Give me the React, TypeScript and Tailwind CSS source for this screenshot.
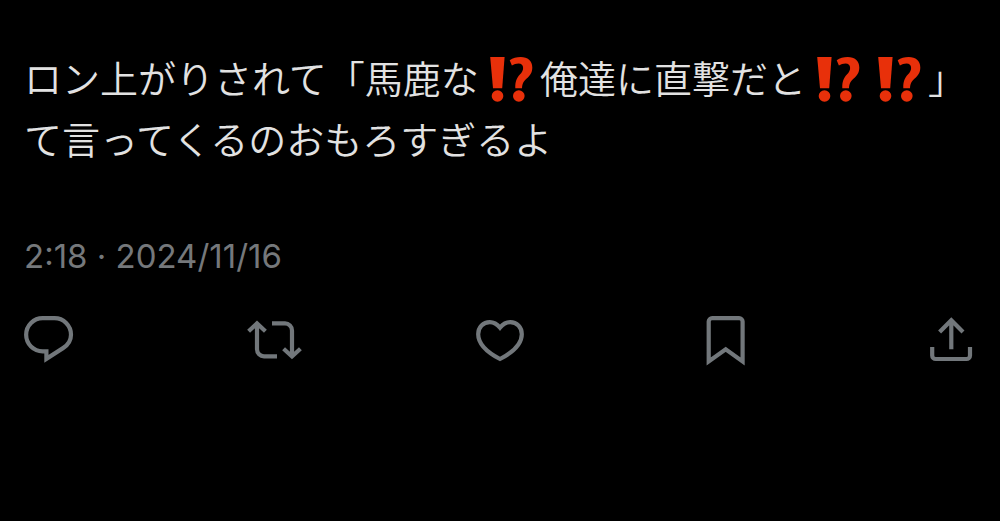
import type { ReactNode } from "react";

function Interrobang() {
  return (
    <svg
      role="img"
      aria-label="⁉️"
      viewBox="-2 0 61 50"
      className="inline-block h-[50px] w-[61px] align-[-11px]"
      fill="#e8300a"
    >
      <path d="M9.2 3h14.4l-2.4 31.3h-9.2z" />
      <circle cx="16.5" cy="42" r="5.8" />
      <path d="M28.7 6.2C31.9 4 35.5 3 39.7 3c7 0 11.6 4 11.6 10.4 0 5-2.2 8-5.6 11.2-3 2.8-4.4 4.8-4.7 9.7h-6.7c-.2-6.6 1.3-10.2 4.6-13.7 2.2-2.4 3.2-4 3.2-6.6 0-3-1.6-4.6-4.6-4.6-2.4 0-4.6.8-6.6 2.2z" />
      <circle cx="37.8" cy="42" r="5.8" />
    </svg>
  );
}

function Action({ label, children }: { label: string; children: ReactNode }) {
  return (
    <button type="button" aria-label={label} className="size-14 text-[#72777b]">
      <svg
        aria-hidden="true"
        viewBox="0 0 56 56"
        className="size-14"
        fill="none"
        stroke="currentColor"
        strokeWidth="4.2"
      >
        {children}
      </svg>
    </button>
  );
}

export default function App() {
  return (
    <main className="min-h-screen bg-black pt-[46px] font-['Inter','Noto_Sans_CJK_JP',sans-serif]">
      <article>
        <p
          lang="ja"
          className="px-6 font-['Noto_Sans_CJK_JP',sans-serif] text-[38px] leading-[61px] font-[350] text-[#e2e2e2]"
        >
          ロン上がりされて「馬鹿な
          <Interrobang />
          俺達に直撃だと
          <Interrobang />
          <Interrobang />」
          <br />
          て言ってくるのおもろすぎるよ
        </p>
        <time
          dateTime="2024-11-16T02:18"
          className="mt-[68px] block px-6 text-[33px] leading-10 text-[#75787b]"
        >
          2:18 · 2024/11/16
        </time>
        <div className="mt-9 flex justify-between px-5">
          <Action label="返信">
            <path d="M22.7 6.2H34.4A16.5 16.5 0 0 1 51 22.7C51 28.6 48 33 43 36.1L26.4 46.8V39.3H22.7A16.5 16.5 0 0 1 22.7 6.2Z" />
          </Action>
          <Action label="リポスト">
            <path d="M2.6 19.2 11 11.4 19.4 19.2M11 11.4V37.3a7 7 0 0 0 7 7H31M26 11.4H39a7 7 0 0 1 7 7V44.4M37.6 36.8 46 44.5 54.4 36.8" />
          </Action>
          <Action label="いいね">
            <path d="M28 15.6C25 12 21.5 10.1 17.8 10.1 11.2 10.1 6.2 15 6.2 22.2 6.2 31.5 15 40.2 28 47 41 40.2 49.8 31.5 49.8 22.2 49.8 15 44.8 10.1 38.2 10.1 34.5 10.1 31 12 28 15.6Z" />
          </Action>
          <Action label="ブックマーク">
            <path d="M10.7 49.4V9.6a3.5 3.5 0 0 1 3.5-3.5H41.1a3.5 3.5 0 0 1 3.5 3.5V49.4L27.7 37.4Z" />
          </Action>
          <Action label="共有">
            <path d="M15.6 20 27.3 8.3 39 20M27.3 8.3V37.3M8.2 35V43.4a3.6 3.6 0 0 0 3.6 3.6H42.4a3.6 3.6 0 0 0 3.6-3.6V35" />
          </Action>
        </div>
      </article>
    </main>
  );
}
